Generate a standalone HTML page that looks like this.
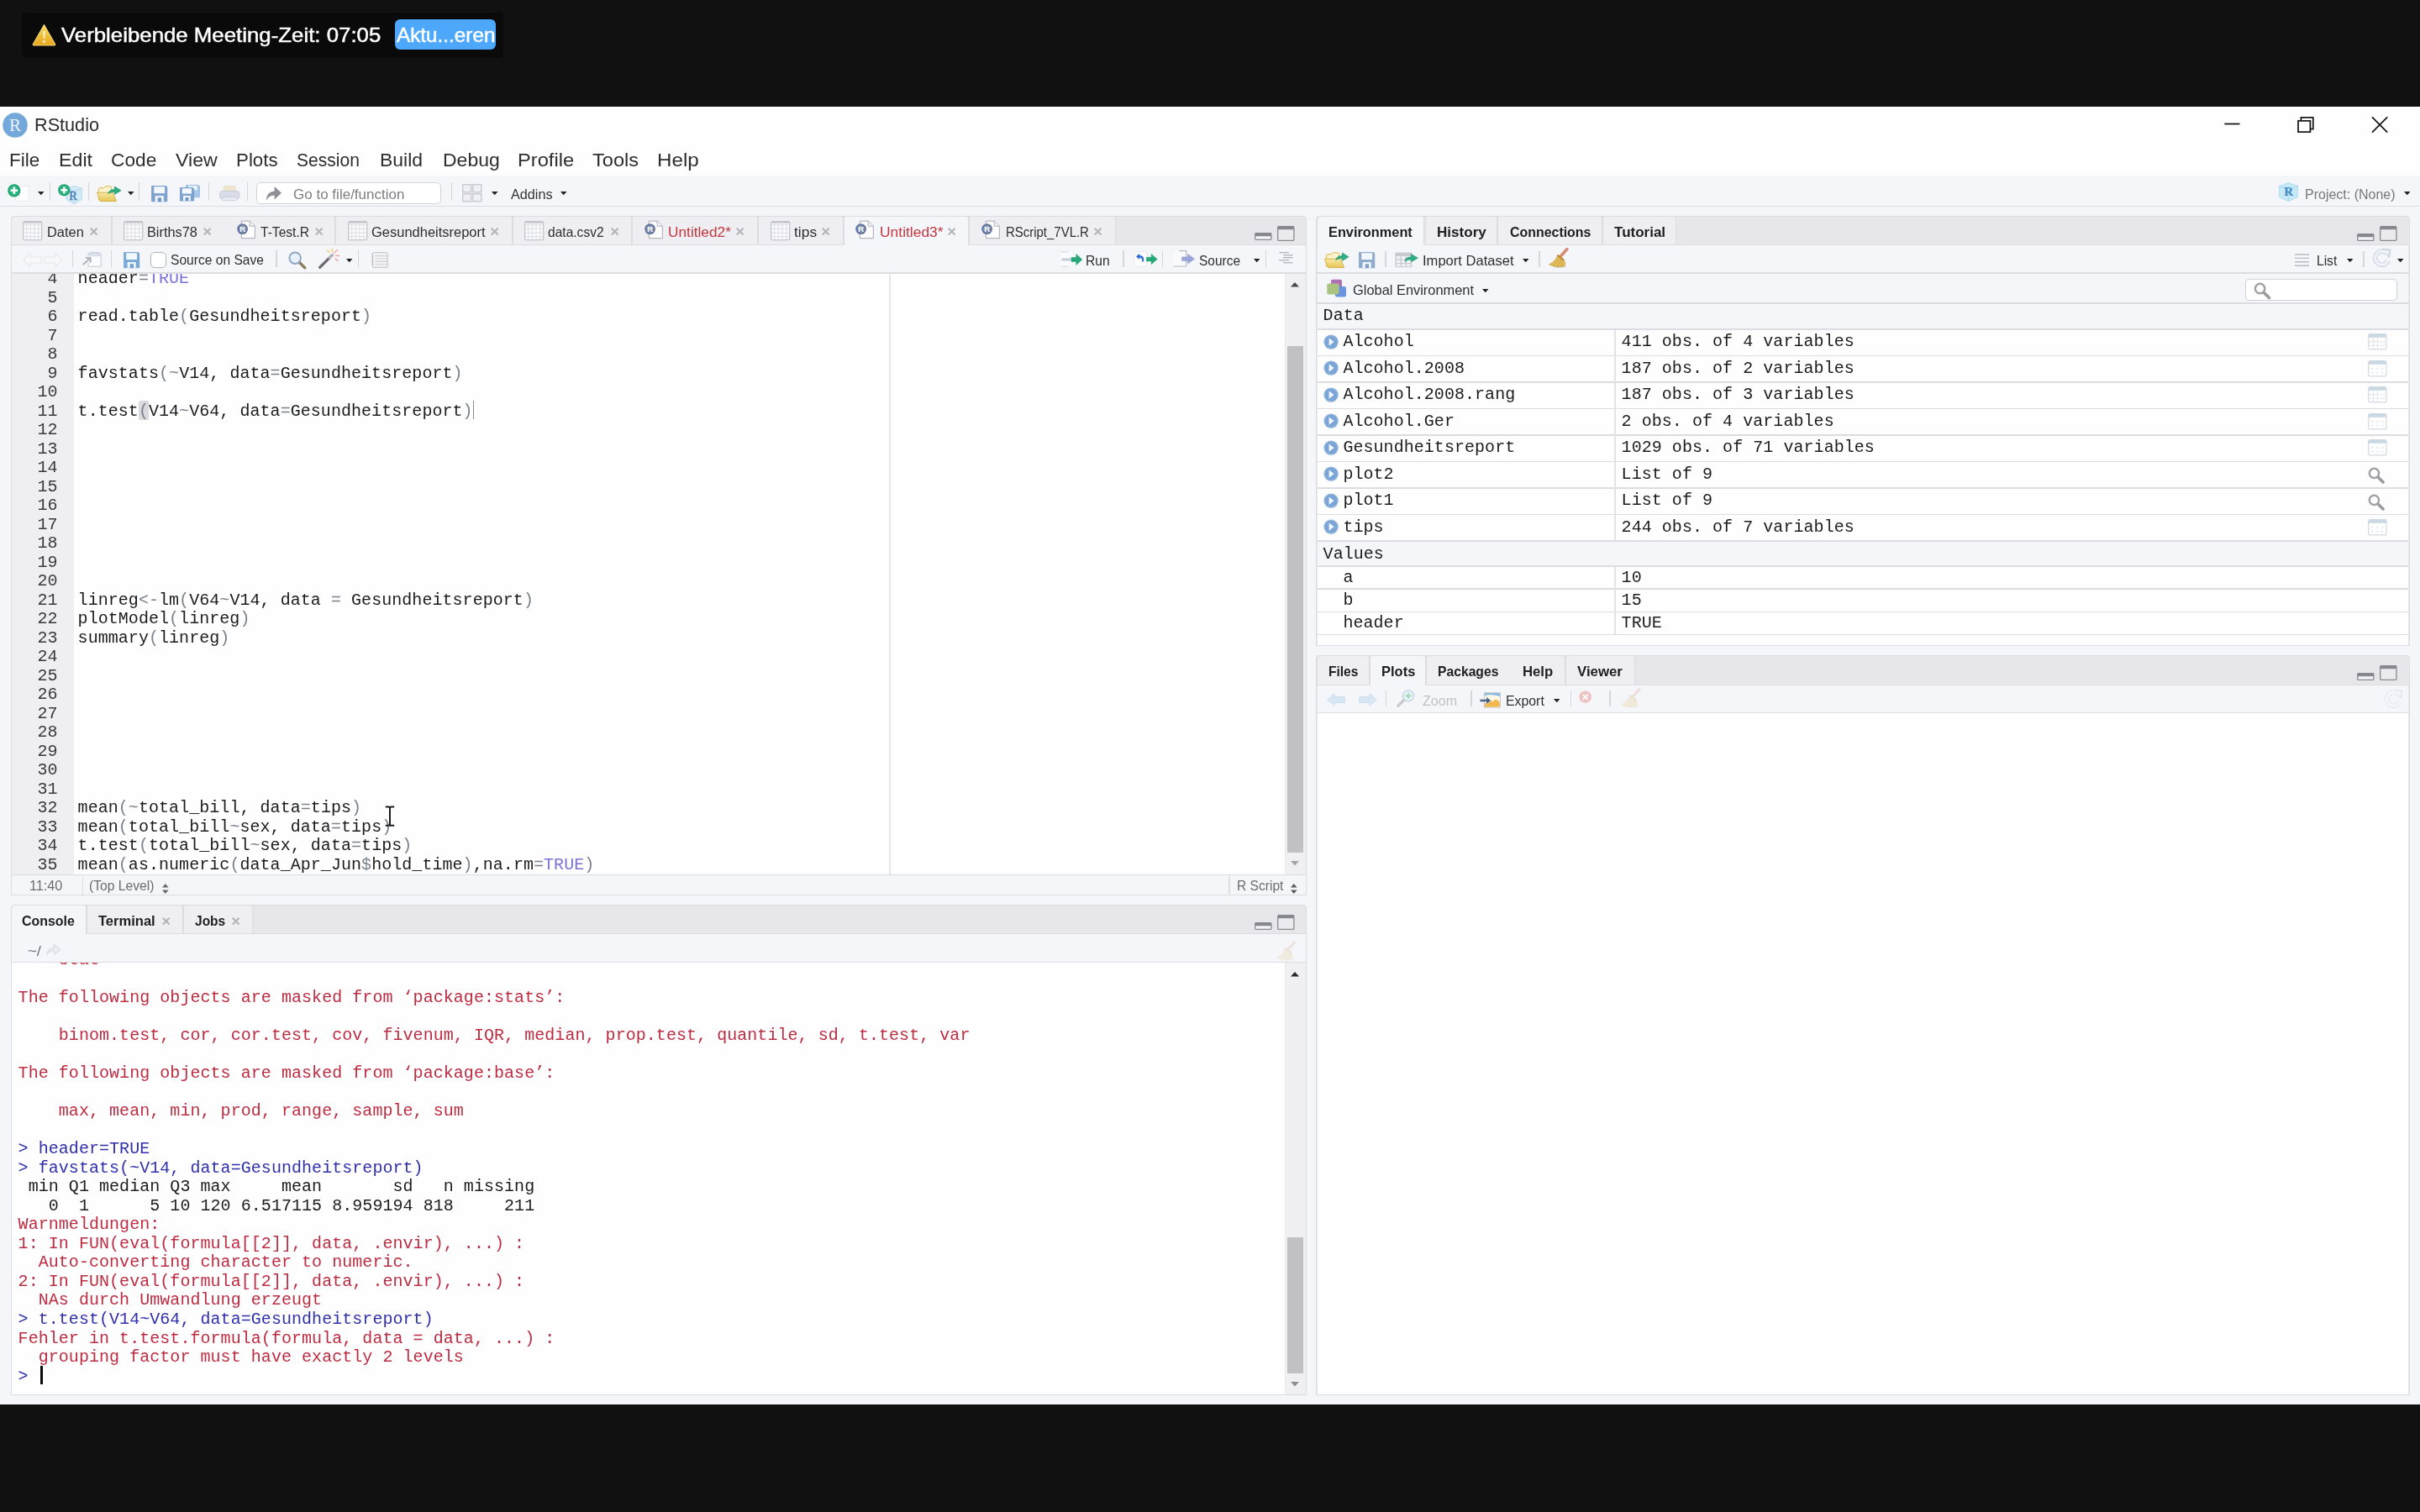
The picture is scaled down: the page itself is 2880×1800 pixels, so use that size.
<!DOCTYPE html>
<html><head><meta charset="utf-8"><title>RStudio</title>
<style>
html,body{margin:0;padding:0;}
body{width:2880px;height:1800px;background:#111111;position:relative;overflow:hidden;font-family:"Liberation Sans",sans-serif;}
.t{position:absolute;white-space:pre;line-height:1;transform-origin:0 50%;filter:blur(0.35px);}
.r{position:absolute;box-sizing:border-box;}
.m{font-family:"Liberation Mono",monospace;font-size:20px;letter-spacing:0.05px;}
svg{overflow:visible;}
</style></head><body>
<div class="r" style="left:26.00px;top:15.00px;width:573.00px;height:53.50px;background:#0a0a0a;border-radius:4px;"></div>
<svg class="r" style="left:37.50px;top:28.00px;" width="29" height="27" viewBox="0 0 29 27"><defs><linearGradient id="wg" x1="0" y1="0" x2="0" y2="1"><stop offset="0" stop-color="#f8dc62"/><stop offset="1" stop-color="#e9a51c"/></linearGradient></defs><path d="M14.5 1.6 L27.6 24.4 Q28 26 26.4 26 H2.6 Q1 26 1.4 24.4 Z" fill="url(#wg)" stroke="#f3d777" stroke-width="1.1" stroke-linejoin="round"/><path d="M13.1 9 h2.8 l-0.6 9 h-1.6 z" fill="#f8f0c8"/><circle cx="14.5" cy="21.6" r="1.7" fill="#f8f0c8"/></svg>
<div class="t" style="left:72.50px;top:31.16px;font-size:23.2px;color:#ffffff;transform:scaleX(1.1132);-webkit-text-stroke:0.45px #fff;">Verbleibende Meeting-Zeit: 07:05</div>
<div class="r" style="left:470.00px;top:23.00px;width:120.20px;height:36.00px;background:#4da8fc;border-radius:6px;"></div>
<div class="t" style="left:471.50px;top:31.16px;font-size:23.2px;color:#ffffff;transform:scaleX(1.0473);-webkit-text-stroke:0.45px #fff;">Aktu...eren</div>
<div class="r" style="left:0.00px;top:127.00px;width:2880.00px;height:1544.50px;background:#f5f6fa;"></div>
<div class="r" style="left:0.00px;top:127.00px;width:2880.00px;height:82.00px;background:#fefefe;"></div>
<svg class="r" style="left:3.00px;top:133.50px;" width="30" height="30" viewBox="0 0 30 30"><circle cx="15" cy="15" r="14.8" fill="#75a8da"/><text x="15" y="22" text-anchor="middle" font-family="Liberation Serif" font-size="21" fill="#eaf2fb">R</text></svg>
<div class="t" style="left:41.00px;top:139.27px;font-size:21.3px;color:#2a2a2a;transform:scaleX(1.0161);">RStudio</div>
<svg class="r" style="left:2640.00px;top:135.00px;" width="210" height="28" viewBox="0 0 210 28"><g stroke="#1a1a1a" stroke-width="1.8" fill="none"><path d="M7.3 12.5H25.5"/><path d="M95 8.8H109.4V22.2H95Z"/><path d="M98.4 8.8V4.9H112.8V18.6H109.4"/><path d="M183 4.4L201.2 22.6M201.2 4.4L183 22.6"/></g></svg>
<div class="t" style="left:11.20px;top:181.27px;font-size:21.3px;color:#2e2e30;transform:scaleX(1.0518);">File</div>
<div class="t" style="left:70.20px;top:181.27px;font-size:21.3px;color:#2e2e30;transform:scaleX(1.0898);">Edit</div>
<div class="t" style="left:132.40px;top:181.27px;font-size:21.3px;color:#2e2e30;transform:scaleX(1.0663);">Code</div>
<div class="t" style="left:209.10px;top:181.27px;font-size:21.3px;color:#2e2e30;transform:scaleX(1.0877);">View</div>
<div class="t" style="left:281.30px;top:181.27px;font-size:21.3px;color:#2e2e30;transform:scaleX(1.0495);">Plots</div>
<div class="t" style="left:353.20px;top:181.27px;font-size:21.3px;color:#2e2e30;transform:scaleX(0.9897);">Session</div>
<div class="t" style="left:451.60px;top:181.27px;font-size:21.3px;color:#2e2e30;transform:scaleX(1.0788);">Build</div>
<div class="t" style="left:526.50px;top:181.27px;font-size:21.3px;color:#2e2e30;transform:scaleX(1.0802);">Debug</div>
<div class="t" style="left:616.40px;top:181.27px;font-size:21.3px;color:#2e2e30;transform:scaleX(1.1113);">Profile</div>
<div class="t" style="left:704.80px;top:181.27px;font-size:21.3px;color:#2e2e30;transform:scaleX(1.1101);">Tools</div>
<div class="t" style="left:781.80px;top:181.27px;font-size:21.3px;color:#2e2e30;transform:scaleX(1.1368);">Help</div>
<div class="r" style="left:0.00px;top:244.60px;width:2880.00px;height:1.60px;background:#dcdce1;"></div>
<div class="r" style="left:58.70px;top:217.00px;width:1.30px;height:22.00px;background:#d6d6dc;"></div>
<div class="r" style="left:105.00px;top:217.00px;width:1.30px;height:22.00px;background:#d6d6dc;"></div>
<div class="r" style="left:165.20px;top:217.00px;width:1.30px;height:22.00px;background:#d6d6dc;"></div>
<div class="r" style="left:247.60px;top:217.00px;width:1.30px;height:22.00px;background:#d6d6dc;"></div>
<div class="r" style="left:293.90px;top:217.00px;width:1.30px;height:22.00px;background:#d6d6dc;"></div>
<div class="r" style="left:536.90px;top:217.00px;width:1.30px;height:22.00px;background:#d6d6dc;"></div>
<div class="r" style="left:305.00px;top:216.80px;width:219.50px;height:25.80px;background:#ffffff;border:1.3px solid #d3d3da;border-radius:5px;"></div>
<div class="t" style="left:348.60px;top:222.83px;font-size:16.5px;color:#7e7e83;transform:scaleX(1.0319);">Go to file/function</div>
<div class="t" style="left:607.50px;top:222.63px;font-size:16.5px;color:#333;transform:scaleX(0.9811);">Addins</div>
<svg class="r" style="left:44.95px;top:228.10px;" width="7.5" height="4.2" viewBox="0 0 7.5 4.2"><path d="M0 0H7.5L3.75 4.2Z" fill="#222"/></svg>
<svg class="r" style="left:151.95px;top:228.10px;" width="7.5" height="4.2" viewBox="0 0 7.5 4.2"><path d="M0 0H7.5L3.75 4.2Z" fill="#222"/></svg>
<svg class="r" style="left:584.95px;top:228.10px;" width="7.5" height="4.2" viewBox="0 0 7.5 4.2"><path d="M0 0H7.5L3.75 4.2Z" fill="#222"/></svg>
<svg class="r" style="left:667.45px;top:228.10px;" width="7.5" height="4.2" viewBox="0 0 7.5 4.2"><path d="M0 0H7.5L3.75 4.2Z" fill="#222"/></svg>
<div class="t" style="left:2743.00px;top:222.63px;font-size:16.5px;color:#77777b;transform:scaleX(0.9688);">Project: (None)</div>
<svg class="r" style="left:2860.75px;top:228.20px;" width="7.5" height="4.2" viewBox="0 0 7.5 4.2"><path d="M0 0H7.5L3.75 4.2Z" fill="#222"/></svg>
<svg class="r" style="left:8.60px;top:218.70px;" width="26" height="21" viewBox="0 0 26 21"><path d="M9.5 2.6H25.2V20.4H9.5Z" fill="#ffffff" stroke="#e4e4ea" stroke-width="0.8"/><circle cx="7.8" cy="7.8" r="7.6" fill="#1fa06e"/><circle cx="7.8" cy="7.8" r="6.2" fill="#2bb57f"/><path d="M7.8 3.6V12M3.6 7.8H12" stroke="#ffffff" stroke-width="2.6"/></svg>
<svg class="r" style="left:68.60px;top:218.70px;" width="29" height="24" viewBox="0 0 29 24"><path d="M10 5.4L19.6 2.2L28.4 5.2V18.6L19.4 23.6L10 19Z" fill="#d3ebf7" stroke="#b4d9ed" stroke-width="0.8"/><path d="M19.4 9V23.6M10 5.4L19.4 9L28.4 5.2" stroke="#a5d0e8" stroke-width="0.8" fill="none"/><text x="18.2" y="19" text-anchor="middle" font-family="Liberation Serif" font-size="14.5" fill="#3f79b5" stroke="#3f79b5" stroke-width="0.3">R</text><circle cx="7.3" cy="7.3" r="7.1" fill="#1fa06e"/><circle cx="7.3" cy="7.3" r="5.8" fill="#2bb57f"/><path d="M7.3 3.4V11.2M3.4 7.3H11.2" stroke="#ffffff" stroke-width="2.5"/></svg>
<svg class="r" style="left:114.80px;top:220.60px;" width="30" height="19.5" viewBox="0 0 30 19.5"><defs><linearGradient id="fg" x1="0" y1="0" x2="0" y2="1"><stop offset="0" stop-color="#f8e9a6"/><stop offset="1" stop-color="#e6c552"/></linearGradient></defs><path d="M2.4 17.6V4.2Q2.4 2.8 3.8 2.8H8.8L10.6 0.8H16.2Q17.6 0.8 17.6 2.4V6" fill="#fbf3cf" stroke="#d9b94c" stroke-width="1"/><path d="M0.8 8.2H19.6L22.6 18.6H3.4Z" fill="url(#fg)" stroke="#d4b042" stroke-width="0.9" stroke-linejoin="round" transform="skewX(8) translate(-1.6 0)"/><path d="M13.6 9.6Q14.6 4.6 21.4 4.4V1L29 5.8L21.4 10.4V7.4Q17 7.2 13.6 9.6Z" fill="#2fae82" stroke="#21976c" stroke-width="0.7" stroke-linejoin="round"/></svg>
<svg class="r" style="left:179.80px;top:220.80px;" width="19.4" height="19.4" viewBox="0 0 19.4 19.4"><g transform="scale(1.010)" opacity="1.0"><path d="M0.6 0.6H17.4L18.6 1.8V18.6H0.6Z" fill="#7fa2cf" stroke="#7096c6" stroke-width="0.8"/><rect x="3.2" y="1.2" width="12.8" height="7.8" fill="#f2f8fe"/><rect x="4.6" y="12" width="10" height="6.8" fill="#f2f8fe"/><rect x="7.6" y="14.2" width="4.4" height="4.8" fill="#7096c6"/></g></svg>
<svg class="r" style="left:214.40px;top:220.40px;" width="24" height="19.5" viewBox="0 0 24 19.5"><path d="M7.6 0.5H22L23.4 1.8V14.6H7.6Z" fill="#a6c8ea" stroke="#8fb4dc" stroke-width="0.8"/><rect x="10" y="1" width="10.8" height="5.4" fill="#e9f3fc"/><path d="M0.5 3.5H15.2L16.6 4.9V19H0.5Z" fill="#7fa2cf" stroke="#7096c6" stroke-width="0.8"/><rect x="2.8" y="4.2" width="11.2" height="6.4" fill="#f2f8fe"/><rect x="4" y="13" width="8.8" height="6" fill="#f2f8fe"/><rect x="6.6" y="15" width="3.8" height="4" fill="#7096c6"/></svg>
<svg class="r" style="left:260.60px;top:220.80px;" width="24.5" height="18.5" viewBox="0 0 24.5 18.5"><path d="M5.4 7V1.6Q5.4 0.6 6.4 0.6H18Q19 0.6 19 1.6V7Z" fill="#efe6cf" stroke="#e2d8c0" stroke-width="0.7"/><rect x="0.5" y="6.4" width="23.5" height="9.4" rx="3.4" fill="#d9dce6" stroke="#c4c8d4" stroke-width="0.8"/><rect x="3.4" y="13.4" width="17.6" height="4.4" rx="1.6" fill="#e8eaf1" stroke="#c4c8d4" stroke-width="0.8"/></svg>
<svg class="r" style="left:316.40px;top:220.60px;" width="19.5" height="18.5" viewBox="0 0 19.5 18.5"><path d="M0.6 17.8Q1.4 7.4 10.6 6.6V1L19 8.8L10.6 16.4V11.4Q4.6 11 0.6 17.8Z" fill="#8f8f95"/></svg>
<svg class="r" style="left:550.40px;top:218.60px;" width="24" height="22" viewBox="0 0 24 22"><g fill="#f0f0f4" stroke="#c6c6cc" stroke-width="1.3"><rect x="0.7" y="0.7" width="10" height="9"/><rect x="12.8" y="0.7" width="10" height="9"/><rect x="0.7" y="11.8" width="10" height="9"/><rect x="12.8" y="11.8" width="10" height="9"/></g></svg>
<svg class="r" style="left:2712.00px;top:217.20px;" width="23" height="23" viewBox="0 0 23 23"><path d="M0.6 4.6L11.4 0.6L22.4 4.4V17.6L11.4 22.6L0.6 17.8Z" fill="#c6e9f8" stroke="#a7d7ee" stroke-width="0.8"/><path d="M11.4 9V22.6M0.6 4.6L11.4 9L22.4 4.4" stroke="#a1d2ea" stroke-width="0.8" fill="none"/><text x="11.6" y="16.4" text-anchor="middle" font-family="Liberation Serif" font-weight="700" font-size="15" fill="#3d86c0">R</text></svg>
<div class="r" style="left:12.60px;top:256.80px;width:1542.40px;height:809.60px;background:#e7e6ea;border:1.3px solid #dcdce1;border-radius:4px 4px 0 0;"></div>
<div class="r" style="left:13.90px;top:291.60px;width:1539.80px;height:773.50px;background:#fefeff;"></div>
<div class="r" style="left:12.60px;top:291.00px;width:1542.40px;height:1.40px;background:#dcdce1;"></div>
<div class="r" style="left:13.00px;top:256.80px;width:119.80px;height:34.20px;background:#efeef2;border:1.3px solid #dcdce1;border-bottom:none;border-radius:5px 3px 0 0;"></div>
<svg class="r" style="left:27.30px;top:262.70px;" width="23.4" height="23.4" viewBox="0 0 23.4 23.4"><rect x="0.7" y="0.7" width="22.00" height="22.00" rx="1.6" fill="#fdfdfe" stroke="#c3c3cb" stroke-width="1.3"/><g stroke="#e1e1ea" stroke-width="1.3" fill="none"><path d="M4.68 1V22.4M1 4.68H22.4" /><path d="M9.36 1V22.4M1 9.36H22.4" /><path d="M14.04 1V22.4M1 14.04H22.4" /><path d="M18.72 1V22.4M1 18.72H22.4" /></g><path d="M1.4 1.7H22.00" stroke="#c6c6cd" stroke-width="2"/></svg>
<div class="t" style="left:55.60px;top:267.93px;font-size:16.5px;color:#2e2e30;transform:scaleX(0.9948);">Daten</div>
<svg class="r" style="left:107.10px;top:271.00px;" width="9.4" height="9.4" viewBox="0 0 9.4 9.4"><path d="M0.8 0.8L8.6 8.6M8.6 0.8L0.8 8.6" stroke="#b4b4b9" stroke-width="2.1" fill="none"/></svg>
<div class="r" style="left:132.80px;top:256.80px;width:266.50px;height:34.20px;background:#efeef2;border:1.3px solid #dcdce1;border-bottom:none;border-radius:3px 3px 0 0;"></div>
<svg class="r" style="left:147.20px;top:262.70px;" width="23.4" height="23.4" viewBox="0 0 23.4 23.4"><rect x="0.7" y="0.7" width="22.00" height="22.00" rx="1.6" fill="#fdfdfe" stroke="#c3c3cb" stroke-width="1.3"/><g stroke="#e1e1ea" stroke-width="1.3" fill="none"><path d="M4.68 1V22.4M1 4.68H22.4" /><path d="M9.36 1V22.4M1 9.36H22.4" /><path d="M14.04 1V22.4M1 14.04H22.4" /><path d="M18.72 1V22.4M1 18.72H22.4" /></g><path d="M1.4 1.7H22.00" stroke="#c6c6cd" stroke-width="2"/></svg>
<div class="t" style="left:175.40px;top:267.93px;font-size:16.5px;color:#2e2e30;transform:scaleX(0.9879);">Births78</div>
<svg class="r" style="left:242.20px;top:271.00px;" width="9.4" height="9.4" viewBox="0 0 9.4 9.4"><path d="M0.8 0.8L8.6 8.6M8.6 0.8L0.8 8.6" stroke="#b4b4b9" stroke-width="2.1" fill="none"/></svg>
<svg class="r" style="left:282.10px;top:262.40px;" width="23" height="23" viewBox="0 0 23 23"><path d="M5.4 1.2H15.2L21.4 7.2V21.6H5.4Z" fill="#fdfdfe" stroke="#b7b7bf" stroke-width="1.2" stroke-linejoin="round"/><path d="M15.2 1.2V7.2H21.4" fill="#f1f1f4" stroke="#b7b7bf" stroke-width="1.1" stroke-linejoin="round"/><circle cx="6.6" cy="10.6" r="6.4" fill="#64779d"/><circle cx="6.6" cy="10.6" r="4.6" fill="#7b8cb0"/><text x="6.7" y="14.2" text-anchor="middle" font-family="Liberation Sans" font-weight="700" font-size="9.6" fill="#ffffff">R</text></svg>
<div class="t" style="left:310.00px;top:267.93px;font-size:16.5px;color:#2e2e30;transform:scaleX(0.9442);">T-Test.R</div>
<svg class="r" style="left:374.60px;top:271.00px;" width="9.4" height="9.4" viewBox="0 0 9.4 9.4"><path d="M0.8 0.8L8.6 8.6M8.6 0.8L0.8 8.6" stroke="#b4b4b9" stroke-width="2.1" fill="none"/></svg>
<div class="r" style="left:399.30px;top:256.80px;width:210.30px;height:34.20px;background:#efeef2;border:1.3px solid #dcdce1;border-bottom:none;border-radius:3px 3px 0 0;"></div>
<svg class="r" style="left:414.30px;top:262.70px;" width="23.4" height="23.4" viewBox="0 0 23.4 23.4"><rect x="0.7" y="0.7" width="22.00" height="22.00" rx="1.6" fill="#fdfdfe" stroke="#c3c3cb" stroke-width="1.3"/><g stroke="#e1e1ea" stroke-width="1.3" fill="none"><path d="M4.68 1V22.4M1 4.68H22.4" /><path d="M9.36 1V22.4M1 9.36H22.4" /><path d="M14.04 1V22.4M1 14.04H22.4" /><path d="M18.72 1V22.4M1 18.72H22.4" /></g><path d="M1.4 1.7H22.00" stroke="#c6c6cd" stroke-width="2"/></svg>
<div class="t" style="left:442.40px;top:267.93px;font-size:16.5px;color:#2e2e30;transform:scaleX(0.9989);">Gesundheitsreport</div>
<svg class="r" style="left:584.40px;top:271.00px;" width="9.4" height="9.4" viewBox="0 0 9.4 9.4"><path d="M0.8 0.8L8.6 8.6M8.6 0.8L0.8 8.6" stroke="#b4b4b9" stroke-width="2.1" fill="none"/></svg>
<div class="r" style="left:609.60px;top:256.80px;width:142.40px;height:34.20px;background:#efeef2;border:1.3px solid #dcdce1;border-bottom:none;border-radius:3px 3px 0 0;"></div>
<svg class="r" style="left:624.30px;top:262.70px;" width="23.4" height="23.4" viewBox="0 0 23.4 23.4"><rect x="0.7" y="0.7" width="22.00" height="22.00" rx="1.6" fill="#fdfdfe" stroke="#c3c3cb" stroke-width="1.3"/><g stroke="#e1e1ea" stroke-width="1.3" fill="none"><path d="M4.68 1V22.4M1 4.68H22.4" /><path d="M9.36 1V22.4M1 9.36H22.4" /><path d="M14.04 1V22.4M1 14.04H22.4" /><path d="M18.72 1V22.4M1 18.72H22.4" /></g><path d="M1.4 1.7H22.00" stroke="#c6c6cd" stroke-width="2"/></svg>
<div class="t" style="left:652.20px;top:267.93px;font-size:16.5px;color:#2e2e30;transform:scaleX(0.9430);">data.csv2</div>
<svg class="r" style="left:726.50px;top:271.00px;" width="9.4" height="9.4" viewBox="0 0 9.4 9.4"><path d="M0.8 0.8L8.6 8.6M8.6 0.8L0.8 8.6" stroke="#b4b4b9" stroke-width="2.1" fill="none"/></svg>
<div class="r" style="left:752.00px;top:256.80px;width:149.80px;height:34.20px;background:#efeef2;border:1.3px solid #dcdce1;border-bottom:none;border-radius:3px 3px 0 0;"></div>
<svg class="r" style="left:766.50px;top:262.40px;" width="23" height="23" viewBox="0 0 23 23"><path d="M5.4 1.2H15.2L21.4 7.2V21.6H5.4Z" fill="#fdfdfe" stroke="#b7b7bf" stroke-width="1.2" stroke-linejoin="round"/><path d="M15.2 1.2V7.2H21.4" fill="#f1f1f4" stroke="#b7b7bf" stroke-width="1.1" stroke-linejoin="round"/><circle cx="6.6" cy="10.6" r="6.4" fill="#64779d"/><circle cx="6.6" cy="10.6" r="4.6" fill="#7b8cb0"/><text x="6.7" y="14.2" text-anchor="middle" font-family="Liberation Sans" font-weight="700" font-size="9.6" fill="#ffffff">R</text></svg>
<div class="t" style="left:794.70px;top:267.93px;font-size:16.5px;color:#c4373f;transform:scaleX(1.0469);">Untitled2*</div>
<svg class="r" style="left:876.20px;top:271.00px;" width="9.4" height="9.4" viewBox="0 0 9.4 9.4"><path d="M0.8 0.8L8.6 8.6M8.6 0.8L0.8 8.6" stroke="#b4b4b9" stroke-width="2.1" fill="none"/></svg>
<div class="r" style="left:901.80px;top:256.80px;width:102.50px;height:34.20px;background:#efeef2;border:1.3px solid #dcdce1;border-bottom:none;border-radius:3px 3px 0 0;"></div>
<svg class="r" style="left:916.70px;top:262.70px;" width="23.4" height="23.4" viewBox="0 0 23.4 23.4"><rect x="0.7" y="0.7" width="22.00" height="22.00" rx="1.6" fill="#fdfdfe" stroke="#c3c3cb" stroke-width="1.3"/><g stroke="#e1e1ea" stroke-width="1.3" fill="none"><path d="M4.68 1V22.4M1 4.68H22.4" /><path d="M9.36 1V22.4M1 9.36H22.4" /><path d="M14.04 1V22.4M1 14.04H22.4" /><path d="M18.72 1V22.4M1 18.72H22.4" /></g><path d="M1.4 1.7H22.00" stroke="#c6c6cd" stroke-width="2"/></svg>
<div class="t" style="left:944.70px;top:267.93px;font-size:16.5px;color:#2e2e30;transform:scaleX(1.0554);">tips</div>
<svg class="r" style="left:978.20px;top:271.00px;" width="9.4" height="9.4" viewBox="0 0 9.4 9.4"><path d="M0.8 0.8L8.6 8.6M8.6 0.8L0.8 8.6" stroke="#b4b4b9" stroke-width="2.1" fill="none"/></svg>
<div class="r" style="left:1004.30px;top:256.80px;width:148.70px;height:36.00px;background:#f5f6fa;border:1.3px solid #dcdce1;border-bottom:none;border-radius:3px 3px 0 0;"></div>
<svg class="r" style="left:1018.20px;top:262.40px;" width="23" height="23" viewBox="0 0 23 23"><path d="M5.4 1.2H15.2L21.4 7.2V21.6H5.4Z" fill="#fdfdfe" stroke="#b7b7bf" stroke-width="1.2" stroke-linejoin="round"/><path d="M15.2 1.2V7.2H21.4" fill="#f1f1f4" stroke="#b7b7bf" stroke-width="1.1" stroke-linejoin="round"/><circle cx="6.6" cy="10.6" r="6.4" fill="#64779d"/><circle cx="6.6" cy="10.6" r="4.6" fill="#7b8cb0"/><text x="6.7" y="14.2" text-anchor="middle" font-family="Liberation Sans" font-weight="700" font-size="9.6" fill="#ffffff">R</text></svg>
<div class="t" style="left:1046.50px;top:267.93px;font-size:16.5px;color:#c4373f;transform:scaleX(1.0567);">Untitled3*</div>
<svg class="r" style="left:1128.40px;top:271.00px;" width="9.4" height="9.4" viewBox="0 0 9.4 9.4"><path d="M0.8 0.8L8.6 8.6M8.6 0.8L0.8 8.6" stroke="#b4b4b9" stroke-width="2.1" fill="none"/></svg>
<div class="r" style="left:1153.00px;top:256.80px;width:175.00px;height:34.20px;background:#efeef2;border:1.3px solid #dcdce1;border-bottom:none;border-radius:3px 3px 0 0;"></div>
<svg class="r" style="left:1168.20px;top:262.40px;" width="23" height="23" viewBox="0 0 23 23"><path d="M5.4 1.2H15.2L21.4 7.2V21.6H5.4Z" fill="#fdfdfe" stroke="#b7b7bf" stroke-width="1.2" stroke-linejoin="round"/><path d="M15.2 1.2V7.2H21.4" fill="#f1f1f4" stroke="#b7b7bf" stroke-width="1.1" stroke-linejoin="round"/><circle cx="6.6" cy="10.6" r="6.4" fill="#64779d"/><circle cx="6.6" cy="10.6" r="4.6" fill="#7b8cb0"/><text x="6.7" y="14.2" text-anchor="middle" font-family="Liberation Sans" font-weight="700" font-size="9.6" fill="#ffffff">R</text></svg>
<div class="t" style="left:1196.90px;top:267.93px;font-size:16.5px;color:#2e2e30;transform:scaleX(0.9063);">RScript_7VL.R</div>
<svg class="r" style="left:1302.20px;top:271.00px;" width="9.4" height="9.4" viewBox="0 0 9.4 9.4"><path d="M0.8 0.8L8.6 8.6M8.6 0.8L0.8 8.6" stroke="#b4b4b9" stroke-width="2.1" fill="none"/></svg>
<svg class="r" style="left:1492.50px;top:277.40px;" width="20.6" height="9" viewBox="0 0 20.6 9"><rect x="0.7" y="0.7" width="19.2" height="7.6" rx="1" fill="#f0f4f9" stroke="#898990" stroke-width="1.3"/><path d="M1 0.6H19.6V4.2H1Z" fill="#87878e"/><path d="M1.6 0.1H19L19.8 0.8H0.8Z" fill="#87878e"/></svg>
<svg class="r" style="left:1519.60px;top:268.50px;" width="20.6" height="18" viewBox="0 0 20.6 18"><rect x="0.7" y="0.7" width="19.2" height="16.6" rx="1" fill="#ebeaee" stroke="#898990" stroke-width="1.3"/><path d="M1 0.6H19.6V4.2H1Z" fill="#87878e"/><path d="M1.6 0.1H19L19.8 0.8H0.8Z" fill="#87878e"/></svg>
<div class="r" style="left:13.90px;top:292.00px;width:1539.80px;height:32.60px;background:#f5f6fa;"></div>
<div class="r" style="left:12.60px;top:324.40px;width:1542.40px;height:1.40px;background:#dcdce1;"></div>
<svg class="r" style="left:26.80px;top:301.00px;" width="22.6" height="17.4" viewBox="0 0 22.6 17.4"><path  d="M0.8 8.7L9 0.9V5.2H21.8V12.2H9V16.5Z" fill="#f8f8fb" stroke="#e9e9ee" stroke-width="1.3" stroke-linejoin="round"/></svg>
<svg class="r" style="left:52.40px;top:301.00px;" width="22.6" height="17.4" viewBox="0 0 22.6 17.4"><path transform="translate(22.6 0) scale(-1 1)" d="M0.8 8.7L9 0.9V5.2H21.8V12.2H9V16.5Z" fill="#f8f8fb" stroke="#e9e9ee" stroke-width="1.3" stroke-linejoin="round"/></svg>
<div class="r" style="left:85.70px;top:298.00px;width:1.30px;height:20.00px;background:#d6d6dc;"></div>
<div class="r" style="left:132.20px;top:298.00px;width:1.30px;height:20.00px;background:#d6d6dc;"></div>
<div class="r" style="left:328.40px;top:298.00px;width:1.30px;height:20.00px;background:#d6d6dc;"></div>
<div class="r" style="left:426.10px;top:298.00px;width:1.30px;height:20.00px;background:#d6d6dc;"></div>
<div class="r" style="left:1336.40px;top:298.00px;width:1.30px;height:20.00px;background:#d6d6dc;"></div>
<div class="r" style="left:1382.90px;top:298.00px;width:1.30px;height:20.00px;background:#d6d6dc;"></div>
<div class="r" style="left:1505.90px;top:298.00px;width:1.30px;height:20.00px;background:#d6d6dc;"></div>
<svg class="r" style="left:98.00px;top:300.00px;" width="23" height="18" viewBox="0 0 23 18"><path d="M7 17.2H22.2V4Q22.2 0.6 18.8 0.6H10.4Q7 0.6 7 4Z" fill="#fbfcfe" stroke="#c9ccd6" stroke-width="1.1"/><path d="M7.5 5.2V4Q7.5 1.1 10.4 1.1H18.8Q21.7 1.1 21.7 4V5.2Z" fill="#d6e0ec"/><path d="M1.2 14.6L9 7.6M4.6 6.8H9.6V11.8" stroke="#fbfbfd" stroke-width="4.2" fill="none" stroke-linecap="round"/><path d="M1.2 14.6L9 7.6M4.6 6.8H9.6V11.8" stroke="#b7b7bf" stroke-width="2.2" fill="none" stroke-linecap="round"/></svg>
<svg class="r" style="left:146.80px;top:300.20px;" width="19.3" height="19.3" viewBox="0 0 19.3 19.3"><g transform="scale(1.005)" opacity="1.0"><path d="M0.6 0.6H17.4L18.6 1.8V18.6H0.6Z" fill="#79aad7" stroke="#6e9fce" stroke-width="0.8"/><rect x="3.2" y="1.2" width="12.8" height="7.8" fill="#f2f8fe"/><rect x="4.6" y="12" width="10" height="6.8" fill="#f2f8fe"/><rect x="7.6" y="14.2" width="4.4" height="4.8" fill="#6e9fce"/></g></svg>
<div class="r" style="left:178.80px;top:300.00px;width:18.90px;height:19.10px;background:#ffffff;border:1.4px solid #b4b4ba;border-radius:5px;"></div>
<div class="t" style="left:203.00px;top:301.43px;font-size:16.5px;color:#303034;transform:scaleX(0.9454);">Source on Save</div>
<svg class="r" style="left:343.00px;top:299.40px;" width="21.5" height="21.5" viewBox="0 0 21.5 21.5"><g transform="scale(1.024)"><path d="M12.4 12.4L19.4 19.4" stroke="#8a8060" stroke-width="3.4" stroke-linecap="round"/><circle cx="8" cy="8" r="6.6" fill="#e8f1fa" stroke="#8fa6c4" stroke-width="1.9"/></g></svg>
<svg class="r" style="left:378.50px;top:295.60px;" width="26" height="24" viewBox="0 0 26 24"><path d="M1.6 22.4L16.4 7.6" stroke="#6a6a70" stroke-width="3.2" stroke-linecap="round"/><path d="M13.2 10.8L16.4 7.6" stroke="#b9b9c0" stroke-width="3.2" stroke-linecap="round"/><g stroke="#f0a090" stroke-width="1.3" stroke-linecap="round"><path d="M19 5L22.6 1.4"/><path d="M20.4 8.4H24.6"/><path d="M20 12L23 14.6"/></g><g stroke="#f3c860" stroke-width="1.3" stroke-linecap="round"><path d="M16.4 3.8V0.6"/><path d="M13 4.4L10.8 2"/></g></svg>
<svg class="r" style="left:412.45px;top:308.30px;" width="7.5" height="4.2" viewBox="0 0 7.5 4.2"><path d="M0 0H7.5L3.75 4.2Z" fill="#222"/></svg>
<svg class="r" style="left:441.60px;top:299.80px;" width="20" height="19" viewBox="0 0 20 19"><rect x="1.6" y="0.7" width="17.6" height="17.6" rx="1.6" fill="#f4f4f7" stroke="#c9c9cf" stroke-width="1.2"/><g stroke="#cfcfd5" stroke-width="1.1"><path d="M4.4 4.6H19M4.4 8H19M4.4 11.4H19M4.4 14.8H19"/></g><path d="M1.2 2.4V16.6" stroke="#b9b9c0" stroke-width="1.6" stroke-dasharray="1.6 1.2"/></svg>
<svg class="r" style="left:1261.00px;top:298.60px;" width="27" height="19" viewBox="0 0 27 19"><rect x="1.8" y="0.6" width="12.8" height="17.7" fill="#fbfbfd"/><g stroke="#dcdce1" stroke-width="1.2"><path d="M1.8 0.8H11"/><path d="M1.8 18.2H11"/></g><path d="M2.4 10H13.4" stroke="#c6cad7" stroke-width="3"/><path d="M14 7.6H19.8V3.6L26.8 10L19.8 16.4V12.4H14Z" fill="#27a877" stroke="#1f9a6c" stroke-width="0.5"/></svg>
<div class="t" style="left:1292.30px;top:302.43px;font-size:16.5px;color:#303034;transform:scaleX(0.9514);">Run</div>
<svg class="r" style="left:1348.60px;top:298.60px;" width="29" height="19" viewBox="0 0 29 19"><rect x="0.7" y="0.5" width="15.3" height="17.8" rx="2.6" fill="#fdfdfe" stroke="#e7e7ec" stroke-width="0.9"/><path d="M10.2 12.4Q10.6 8 7.2 7.8V10L3 6.4L7.2 2.8V5Q13.2 5 12.2 12.4Z" fill="#2f6fd6"/><path d="M15.4 7.3H21.2V3.6L28.2 9.6L21.2 15.7V11.9H15.4Z" fill="#27a877" stroke="#1f9a6c" stroke-width="0.5"/></svg>
<svg class="r" style="left:1396.00px;top:298.40px;" width="26" height="20" viewBox="0 0 26 20"><rect x="0.6" y="0.6" width="15" height="18.4" fill="#fbfbfd"/><path d="M7.6 0.7H15.6V19H0.6" fill="none" stroke="#b9b9c1" stroke-width="1.2"/><path d="M10.6 7.9H17.6V4.4L25.6 10.2L17.6 15.9V12.4H10.6Z" fill="#9aa6da" stroke="#8f9bd2" stroke-width="0.5"/></svg>
<div class="t" style="left:1427.20px;top:302.43px;font-size:16.5px;color:#303034;transform:scaleX(0.9372);">Source</div>
<svg class="r" style="left:1492.25px;top:308.30px;" width="7.5" height="4.2" viewBox="0 0 7.5 4.2"><path d="M0 0H7.5L3.75 4.2Z" fill="#222"/></svg>
<svg class="r" style="left:1522.20px;top:300.00px;" width="17" height="14" viewBox="0 0 17 14"><g stroke="#adafb7" stroke-width="1.25"><path d="M0.4 0.7H12"/><path d="M5.1 3.7H16.6"/><path d="M5.1 6.7H16.6"/><path d="M0.4 9.8H12"/><path d="M5.1 12.8H16.6"/></g></svg>
<div class="r" style="left:13.90px;top:325.6px;width:1515.10px;height:715.40px;background:#fefeff;overflow:hidden;">
<div class="r" style="left:0;top:0;width:74.40px;height:715.40px;background:#efeff2;"></div>
<div class="r" style="left:1044.30px;top:0;width:1.4px;height:715.40px;background:#e6e6ea;"></div>
<div class="r" style="left:150.88px;top:151.30px;width:12.03px;height:23px;background:#d9d9de;border-radius:2px;"></div>
<div class="t m" style="left:42.67px;top:-3.13px;color:#3a3a3e;">4</div>
<div class="t m" style="left:78.70px;top:-3.13px;color:#1c1c1c;">header<span style="color:#7b828c">=</span><span style="color:#7a73d8">TRUE</span></div>
<div class="t m" style="left:42.67px;top:19.37px;color:#3a3a3e;">5</div>
<div class="t m" style="left:42.67px;top:41.87px;color:#3a3a3e;">6</div>
<div class="t m" style="left:78.70px;top:41.87px;color:#1c1c1c;">read.table<span style="color:#7b828c">(</span>Gesundheitsreport<span style="color:#7b828c">)</span></div>
<div class="t m" style="left:42.67px;top:64.37px;color:#3a3a3e;">7</div>
<div class="t m" style="left:42.67px;top:86.87px;color:#3a3a3e;">8</div>
<div class="t m" style="left:42.67px;top:109.37px;color:#3a3a3e;">9</div>
<div class="t m" style="left:78.70px;top:109.37px;color:#1c1c1c;">favstats<span style="color:#7b828c">(</span><span style="color:#7b828c">~</span>V14, data<span style="color:#7b828c">=</span>Gesundheitsreport<span style="color:#7b828c">)</span></div>
<div class="t m" style="left:30.64px;top:131.87px;color:#3a3a3e;">10</div>
<div class="t m" style="left:30.64px;top:154.37px;color:#3a3a3e;">11</div>
<div class="t m" style="left:78.70px;top:154.37px;color:#1c1c1c;">t.test<span style="color:#7b828c">(</span>V14<span style="color:#7b828c">~</span>V64, data<span style="color:#7b828c">=</span>Gesundheitsreport<span style="color:#7b828c">)</span></div>
<div class="t m" style="left:30.64px;top:176.87px;color:#3a3a3e;">12</div>
<div class="t m" style="left:30.64px;top:199.37px;color:#3a3a3e;">13</div>
<div class="t m" style="left:30.64px;top:221.87px;color:#3a3a3e;">14</div>
<div class="t m" style="left:30.64px;top:244.37px;color:#3a3a3e;">15</div>
<div class="t m" style="left:30.64px;top:266.87px;color:#3a3a3e;">16</div>
<div class="t m" style="left:30.64px;top:289.37px;color:#3a3a3e;">17</div>
<div class="t m" style="left:30.64px;top:311.87px;color:#3a3a3e;">18</div>
<div class="t m" style="left:30.64px;top:334.37px;color:#3a3a3e;">19</div>
<div class="t m" style="left:30.64px;top:356.87px;color:#3a3a3e;">20</div>
<div class="t m" style="left:30.64px;top:379.37px;color:#3a3a3e;">21</div>
<div class="t m" style="left:78.70px;top:379.37px;color:#1c1c1c;">linreg<span style="color:#7b828c">&lt;-</span>lm<span style="color:#7b828c">(</span>V64<span style="color:#7b828c">~</span>V14, data <span style="color:#7b828c">=</span> Gesundheitsreport<span style="color:#7b828c">)</span></div>
<div class="t m" style="left:30.64px;top:401.87px;color:#3a3a3e;">22</div>
<div class="t m" style="left:78.70px;top:401.87px;color:#1c1c1c;">plotModel<span style="color:#7b828c">(</span>linreg<span style="color:#7b828c">)</span></div>
<div class="t m" style="left:30.64px;top:424.37px;color:#3a3a3e;">23</div>
<div class="t m" style="left:78.70px;top:424.37px;color:#1c1c1c;">summary<span style="color:#7b828c">(</span>linreg<span style="color:#7b828c">)</span></div>
<div class="t m" style="left:30.64px;top:446.87px;color:#3a3a3e;">24</div>
<div class="t m" style="left:30.64px;top:469.37px;color:#3a3a3e;">25</div>
<div class="t m" style="left:30.64px;top:491.87px;color:#3a3a3e;">26</div>
<div class="t m" style="left:30.64px;top:514.37px;color:#3a3a3e;">27</div>
<div class="t m" style="left:30.64px;top:536.87px;color:#3a3a3e;">28</div>
<div class="t m" style="left:30.64px;top:559.37px;color:#3a3a3e;">29</div>
<div class="t m" style="left:30.64px;top:581.87px;color:#3a3a3e;">30</div>
<div class="t m" style="left:30.64px;top:604.37px;color:#3a3a3e;">31</div>
<div class="t m" style="left:30.64px;top:626.87px;color:#3a3a3e;">32</div>
<div class="t m" style="left:78.70px;top:626.87px;color:#1c1c1c;">mean<span style="color:#7b828c">(</span><span style="color:#7b828c">~</span>total_bill, data<span style="color:#7b828c">=</span>tips<span style="color:#7b828c">)</span></div>
<div class="t m" style="left:30.64px;top:649.37px;color:#3a3a3e;">33</div>
<div class="t m" style="left:78.70px;top:649.37px;color:#1c1c1c;">mean<span style="color:#7b828c">(</span>total_bill<span style="color:#7b828c">~</span>sex, data<span style="color:#7b828c">=</span>tips<span style="color:#7b828c">)</span></div>
<div class="t m" style="left:30.64px;top:671.87px;color:#3a3a3e;">34</div>
<div class="t m" style="left:78.70px;top:671.87px;color:#1c1c1c;">t.test<span style="color:#7b828c">(</span>total_bill<span style="color:#7b828c">~</span>sex, data<span style="color:#7b828c">=</span>tips<span style="color:#7b828c">)</span></div>
<div class="t m" style="left:30.64px;top:694.37px;color:#3a3a3e;">35</div>
<div class="t m" style="left:78.70px;top:694.37px;color:#1c1c1c;">mean<span style="color:#7b828c">(</span>as.numeric<span style="color:#7b828c">(</span>data_Apr_Jun<span style="color:#7b828c">$</span>hold_time<span style="color:#7b828c">)</span>,na.rm<span style="color:#7b828c">=</span><span style="color:#7a73d8">TRUE</span><span style="color:#7b828c">)</span></div>
<div class="r" style="left:548.87px;top:151.80px;width:1.6px;height:22px;background:#8a8a8e;"></div>
<svg class="r" style="left:444.30px;top:633.80px" width="12" height="25" viewBox="0 0 12 25"><path d="M0.8 1.4H4.4Q6 1.4 6 3Q6 1.4 7.6 1.4H11.2M6 2.4V22.6M0.8 23.8H4.4Q6 23.8 6 22.2Q6 23.8 7.6 23.8H11.2" stroke="#1c1c1c" stroke-width="2" fill="none"/></svg>
</div>
<div class="r" style="left:1529.00px;top:325.60px;width:25.00px;height:715.40px;background:#f0f0f3;border-left:1px solid #e9e9ee;"></div>
<div class="r" style="left:1531.60px;top:412.00px;width:19.60px;height:602.50px;background:#c1c1c3;"></div>
<svg class="r" style="left:1536.00px;top:336.40px;" width="10" height="5.4" viewBox="0 0 10 5.4"><path d="M0 5.4L5 0L10 5.4Z" fill="#4a4a4e"/></svg>
<svg class="r" style="left:1536.00px;top:1024.60px;" width="10" height="5.4" viewBox="0 0 10 5.4"><path d="M0 0L5 5.4L10 0Z" fill="#a3a3a7"/></svg>
<div class="r" style="left:13.90px;top:1041.00px;width:1539.80px;height:24.40px;background:#f5f6fa;border-top:1.3px solid #dcdce1;"></div>
<div class="t" style="left:35.40px;top:1046.33px;font-size:16.5px;color:#6c6c70;transform:scaleX(0.9784);">11:40</div>
<div class="r" style="left:97.60px;top:1042.50px;width:1.30px;height:22.50px;background:#dedee3;"></div>
<div class="t" style="left:106.30px;top:1046.33px;font-size:16.5px;color:#6c6c70;transform:scaleX(0.9495);">(Top Level)</div>
<svg class="r" style="left:193.40px;top:1052.00px;" width="7.6" height="12" viewBox="0 0 7.6 12"><path d="M0 4.6L3.8 0L7.6 4.6ZM0 7.4L3.8 12L7.6 7.4Z" fill="#6c6c70"/></svg>
<div class="r" style="left:1462.40px;top:1042.50px;width:1.30px;height:22.50px;background:#dedee3;"></div>
<div class="t" style="left:1471.60px;top:1046.33px;font-size:16.5px;color:#6c6c70;transform:scaleX(0.9441);">R Script</div>
<svg class="r" style="left:1536.00px;top:1052.00px;" width="7.6" height="12" viewBox="0 0 7.6 12"><path d="M0 4.6L3.8 0L7.6 4.6ZM0 7.4L3.8 12L7.6 7.4Z" fill="#5c5c60"/></svg>
<div class="r" style="left:12.60px;top:1077.20px;width:1542.40px;height:583.80px;background:#e7e6ea;border:1.3px solid #dcdce1;border-radius:4px 4px 0 0;"></div>
<div class="r" style="left:13.90px;top:1112.00px;width:1539.80px;height:547.70px;background:#fefeff;"></div>
<div class="r" style="left:12.60px;top:1111.40px;width:1542.40px;height:1.40px;background:#dcdce1;"></div>
<div class="r" style="left:13.00px;top:1077.20px;width:89.50px;height:36.00px;background:#f5f6fa;border:1.3px solid #dcdce1;border-bottom:none;border-radius:5px 3px 0 0;"></div>
<div class="t" style="left:26.30px;top:1088.23px;font-size:16.5px;color:#202024;font-weight:700;transform:scaleX(0.9648);">Console</div>
<div class="r" style="left:102.50px;top:1077.20px;width:115.30px;height:34.20px;background:#efeef2;border:1.3px solid #dcdce1;border-bottom:none;border-radius:3px 3px 0 0;"></div>
<div class="t" style="left:116.60px;top:1088.23px;font-size:16.5px;color:#202024;font-weight:700;transform:scaleX(1.0023);">Terminal</div>
<svg class="r" style="left:192.60px;top:1092.40px;" width="9.4" height="9.4" viewBox="0 0 9.4 9.4"><path d="M0.8 0.8L8.6 8.6M8.6 0.8L0.8 8.6" stroke="#b4b4b9" stroke-width="2.1" fill="none"/></svg>
<div class="r" style="left:217.80px;top:1077.20px;width:83.70px;height:34.20px;background:#efeef2;border:1.3px solid #dcdce1;border-bottom:none;border-radius:3px 3px 0 0;"></div>
<div class="t" style="left:231.60px;top:1088.23px;font-size:16.5px;color:#202024;font-weight:700;transform:scaleX(0.9400);">Jobs</div>
<svg class="r" style="left:276.20px;top:1092.40px;" width="9.4" height="9.4" viewBox="0 0 9.4 9.4"><path d="M0.8 0.8L8.6 8.6M8.6 0.8L0.8 8.6" stroke="#b4b4b9" stroke-width="2.1" fill="none"/></svg>
<svg class="r" style="left:1492.60px;top:1098.20px;" width="20.6" height="9" viewBox="0 0 20.6 9"><rect x="0.7" y="0.7" width="19.2" height="7.6" rx="1" fill="#f0f4f9" stroke="#898990" stroke-width="1.3"/><path d="M1 0.6H19.6V4.2H1Z" fill="#87878e"/><path d="M1.6 0.1H19L19.8 0.8H0.8Z" fill="#87878e"/></svg>
<svg class="r" style="left:1519.60px;top:1089.00px;" width="20.6" height="18" viewBox="0 0 20.6 18"><rect x="0.7" y="0.7" width="19.2" height="16.6" rx="1" fill="#ebeaee" stroke="#898990" stroke-width="1.3"/><path d="M1 0.6H19.6V4.2H1Z" fill="#87878e"/><path d="M1.6 0.1H19L19.8 0.8H0.8Z" fill="#87878e"/></svg>
<div class="r" style="left:13.90px;top:1112.40px;width:1539.80px;height:32.40px;background:#f5f6fa;"></div>
<div class="r" style="left:12.60px;top:1144.60px;width:1542.40px;height:1.40px;background:#dcdce1;"></div>
<div class="t" style="left:33.00px;top:1124.03px;font-size:16.5px;color:#6e6e74;transform:scaleX(1.1252);">~/</div>
<svg class="r" style="left:54.50px;top:1123.40px;" width="18" height="14" viewBox="0 0 18 14"><path d="M0.8 13.2Q1.6 6 9.4 5.6V1.4L17 7.4L9.4 13V9Q4.4 8.8 0.8 13.2Z" fill="#ececf1" stroke="#d9d9e0" stroke-width="1.1" stroke-linejoin="round"/></svg>
<svg class="r" style="left:1519.00px;top:1120.00px;" width="24" height="24" viewBox="0 0 24 24"><g opacity="0.16"><ellipse cx="13" cy="22.6" rx="8" ry="1.3" fill="#d9d9de"/><path d="M21.8 1.6L14.2 10.2" stroke="#d98a72" stroke-width="3.6" stroke-linecap="round"/><path d="M11.2 8.4L17.4 13.4Q20.4 17.6 19.6 21.2Q12 24.6 0.6 20Q8.6 15.6 11.2 8.4Z" fill="#e3bd5c" stroke="#caa244" stroke-width="0.8" stroke-linejoin="round"/><path d="M11 9.4L17.2 14.2" stroke="#b98d3a" stroke-width="2.4" stroke-linecap="round"/><path d="M5.4 20.6Q9.8 17.6 11.6 13.4M10 22Q13 18.8 14 15M14.6 22Q16 19 16.2 16.2" stroke="#c9a043" stroke-width="0.8" fill="none"/></g></svg>
<div class="r" style="left:13.90px;top:1146px;width:1515.10px;height:513.70px;background:#fefeff;overflow:hidden;">
<div class="t m" style="left:7.70px;top:-13.09px;color:#bd2d42;">    stat</div>
<div class="t m" style="left:7.70px;top:31.97px;color:#bd2d42;">The following objects are masked from ‘package:stats’:</div>
<div class="t m" style="left:7.70px;top:77.03px;color:#bd2d42;">    binom.test, cor, cor.test, cov, fivenum, IQR, median, prop.test, quantile, sd, t.test, var</div>
<div class="t m" style="left:7.70px;top:122.09px;color:#bd2d42;">The following objects are masked from ‘package:base’:</div>
<div class="t m" style="left:7.70px;top:167.15px;color:#bd2d42;">    max, mean, min, prod, range, sample, sum</div>
<div class="t m" style="left:7.70px;top:212.21px;color:#3030aa;">&gt; header=TRUE</div>
<div class="t m" style="left:7.70px;top:234.74px;color:#3030aa;">&gt; favstats(~V14, data=Gesundheitsreport)</div>
<div class="t m" style="left:7.70px;top:257.27px;color:#1c1c1c;"> min Q1 median Q3 max     mean       sd   n missing</div>
<div class="t m" style="left:7.70px;top:279.80px;color:#1c1c1c;">   0  1      5 10 120 6.517115 8.959194 818     211</div>
<div class="t m" style="left:7.70px;top:302.33px;color:#bd2d42;">Warnmeldungen:</div>
<div class="t m" style="left:7.70px;top:324.86px;color:#bd2d42;">1: In FUN(eval(formula[[2]], data, .envir), ...) :</div>
<div class="t m" style="left:7.70px;top:347.39px;color:#bd2d42;">  Auto-converting character to numeric.</div>
<div class="t m" style="left:7.70px;top:369.92px;color:#bd2d42;">2: In FUN(eval(formula[[2]], data, .envir), ...) :</div>
<div class="t m" style="left:7.70px;top:392.45px;color:#bd2d42;">  NAs durch Umwandlung erzeugt</div>
<div class="t m" style="left:7.70px;top:414.98px;color:#3030aa;">&gt; t.test(V14~V64, data=Gesundheitsreport)</div>
<div class="t m" style="left:7.70px;top:437.51px;color:#bd2d42;">Fehler in t.test.formula(formula, data = data, ...) :</div>
<div class="t m" style="left:7.70px;top:460.04px;color:#bd2d42;">  grouping factor must have exactly 2 levels</div>
<div class="t m" style="left:7.70px;top:482.57px;color:#3030aa;">&gt; </div>
<div class="r" style="left:33.96px;top:479.60px;width:3.2px;height:22.4px;background:#0c0c0c;"></div>
</div>
<div class="r" style="left:1529.00px;top:1146.00px;width:25.00px;height:513.70px;background:#f0f0f3;border-left:1px solid #e9e9ee;"></div>
<div class="r" style="left:1531.60px;top:1472.70px;width:19.60px;height:162.00px;background:#c1c1c3;"></div>
<svg class="r" style="left:1536.00px;top:1157.40px;" width="10" height="5.4" viewBox="0 0 10 5.4"><path d="M0 5.4L5 0L10 5.4Z" fill="#2a2a2e"/></svg>
<svg class="r" style="left:1536.00px;top:1644.60px;" width="10" height="5.4" viewBox="0 0 10 5.4"><path d="M0 0L5 5.4L10 0Z" fill="#8b8b90"/></svg>
<div class="r" style="left:1566.40px;top:256.80px;width:1301.20px;height:512.20px;background:#e7e6ea;border:1.3px solid #dcdce1;border-radius:4px 4px 0 0;"></div>
<div class="r" style="left:1567.70px;top:291.60px;width:1298.60px;height:476.10px;background:#fefeff;"></div>
<div class="r" style="left:1566.40px;top:291.00px;width:1301.20px;height:1.40px;background:#dcdce1;"></div>
<div class="r" style="left:1566.80px;top:256.80px;width:128.70px;height:36.00px;background:#f5f6fa;border:1.3px solid #dcdce1;border-bottom:none;border-radius:5px 3px 0 0;"></div>
<div class="t" style="left:1580.70px;top:268.43px;font-size:16.5px;color:#202024;font-weight:700;transform:scaleX(0.9896);">Environment</div>
<div class="r" style="left:1695.50px;top:256.80px;width:86.90px;height:34.20px;background:#efeef2;border:1.3px solid #dcdce1;border-bottom:none;border-radius:3px 3px 0 0;"></div>
<div class="t" style="left:1709.60px;top:268.43px;font-size:16.5px;color:#202024;font-weight:700;transform:scaleX(1.0343);">History</div>
<div class="r" style="left:1782.40px;top:256.80px;width:125.00px;height:34.20px;background:#efeef2;border:1.3px solid #dcdce1;border-bottom:none;border-radius:3px 3px 0 0;"></div>
<div class="t" style="left:1796.60px;top:268.43px;font-size:16.5px;color:#202024;font-weight:700;transform:scaleX(0.9648);">Connections</div>
<div class="r" style="left:1907.40px;top:256.80px;width:88.00px;height:34.20px;background:#efeef2;border:1.3px solid #dcdce1;border-bottom:none;border-radius:3px 3px 0 0;"></div>
<div class="t" style="left:1921.20px;top:268.43px;font-size:16.5px;color:#202024;font-weight:700;transform:scaleX(1.0308);">Tutorial</div>
<svg class="r" style="left:2805.00px;top:277.50px;" width="20.6" height="9" viewBox="0 0 20.6 9"><rect x="0.7" y="0.7" width="19.2" height="7.6" rx="1" fill="#f0f4f9" stroke="#898990" stroke-width="1.3"/><path d="M1 0.6H19.6V4.2H1Z" fill="#87878e"/><path d="M1.6 0.1H19L19.8 0.8H0.8Z" fill="#87878e"/></svg>
<svg class="r" style="left:2832.00px;top:268.50px;" width="20.6" height="18" viewBox="0 0 20.6 18"><rect x="0.7" y="0.7" width="19.2" height="16.6" rx="1" fill="#ebeaee" stroke="#898990" stroke-width="1.3"/><path d="M1 0.6H19.6V4.2H1Z" fill="#87878e"/><path d="M1.6 0.1H19L19.8 0.8H0.8Z" fill="#87878e"/></svg>
<div class="r" style="left:1567.70px;top:292.00px;width:1298.60px;height:32.60px;background:#f5f6fa;"></div>
<div class="r" style="left:1566.40px;top:324.40px;width:1301.20px;height:1.40px;background:#dcdce1;"></div>
<svg class="r" style="left:1576.00px;top:300.40px;" width="30" height="19.5" viewBox="0 0 30 19.5"><defs><linearGradient id="fg" x1="0" y1="0" x2="0" y2="1"><stop offset="0" stop-color="#f8e9a6"/><stop offset="1" stop-color="#e6c552"/></linearGradient></defs><path d="M2.4 17.6V4.2Q2.4 2.8 3.8 2.8H8.8L10.6 0.8H16.2Q17.6 0.8 17.6 2.4V6" fill="#fbf3cf" stroke="#d9b94c" stroke-width="1"/><path d="M0.8 8.2H19.6L22.6 18.6H3.4Z" fill="url(#fg)" stroke="#d4b042" stroke-width="0.9" stroke-linejoin="round" transform="skewX(8) translate(-1.6 0)"/><path d="M13.6 9.6Q14.6 4.6 21.4 4.4V1L29 5.8L21.4 10.4V7.4Q17 7.2 13.6 9.6Z" fill="#2fae82" stroke="#21976c" stroke-width="0.7" stroke-linejoin="round"/></svg>
<svg class="r" style="left:1616.90px;top:300.00px;" width="19.4" height="19.4" viewBox="0 0 19.4 19.4"><g transform="scale(1.010)" opacity="1.0"><path d="M0.6 0.6H17.4L18.6 1.8V18.6H0.6Z" fill="#8eaacd" stroke="#809fc6" stroke-width="0.8"/><rect x="3.2" y="1.2" width="12.8" height="7.8" fill="#f2f8fe"/><rect x="4.6" y="12" width="10" height="6.8" fill="#f2f8fe"/><rect x="7.6" y="14.2" width="4.4" height="4.8" fill="#809fc6"/></g></svg>
<div class="r" style="left:1648.40px;top:298.60px;width:1.30px;height:19.00px;background:#d6d6dc;"></div>
<div class="r" style="left:1831.40px;top:298.60px;width:1.30px;height:19.00px;background:#d6d6dc;"></div>
<div class="r" style="left:2812.40px;top:298.60px;width:1.30px;height:19.00px;background:#d6d6dc;"></div>
<svg class="r" style="left:1660.00px;top:299.80px;" width="28" height="19" viewBox="0 0 28 19"><rect x="0.4" y="0.6" width="19.8" height="17.6" fill="#c9c9d1"/><g fill="#f2f2f6"><rect x="1.8" y="5" width="4.8" height="3.4"/><rect x="7.9" y="5" width="4.8" height="3.4"/><rect x="14" y="5" width="4.8" height="3.4"/><rect x="1.8" y="9.6" width="4.8" height="3.4"/><rect x="7.9" y="9.6" width="4.8" height="3.4"/><rect x="14" y="9.6" width="4.8" height="3.4"/><rect x="1.8" y="14.2" width="4.8" height="3"/><rect x="7.9" y="14.2" width="4.8" height="3"/><rect x="14" y="14.2" width="4.8" height="3"/></g><path d="M11.8 11.4Q12.4 6 19.4 5.8V2.4L27.4 7.2L19.4 11.8V8.8Q15 8.6 11.8 11.4Z" fill="#2fae82" stroke="#21976c" stroke-width="0.6"/></svg>
<div class="t" style="left:1692.80px;top:302.43px;font-size:16.5px;color:#303034;transform:scaleX(1.0027);">Import Dataset</div>
<svg class="r" style="left:1812.05px;top:308.30px;" width="7.5" height="4.2" viewBox="0 0 7.5 4.2"><path d="M0 0H7.5L3.75 4.2Z" fill="#222"/></svg>
<svg class="r" style="left:1843.40px;top:295.20px;" width="24" height="24" viewBox="0 0 24 24"><g opacity="1.0"><ellipse cx="13" cy="22.6" rx="8" ry="1.3" fill="#d9d9de"/><path d="M21.8 1.6L14.2 10.2" stroke="#d98a72" stroke-width="3.6" stroke-linecap="round"/><path d="M11.2 8.4L17.4 13.4Q20.4 17.6 19.6 21.2Q12 24.6 0.6 20Q8.6 15.6 11.2 8.4Z" fill="#e3bd5c" stroke="#caa244" stroke-width="0.8" stroke-linejoin="round"/><path d="M11 9.4L17.2 14.2" stroke="#b98d3a" stroke-width="2.4" stroke-linecap="round"/><path d="M5.4 20.6Q9.8 17.6 11.6 13.4M10 22Q13 18.8 14 15M14.6 22Q16 19 16.2 16.2" stroke="#c9a043" stroke-width="0.8" fill="none"/></g></svg>
<svg class="r" style="left:2731.00px;top:302.00px;" width="17" height="15" viewBox="0 0 17 15"><g stroke="#b9b9bf" stroke-width="1.4"><path d="M0 1H17M0 5.4H17M0 9.8H17M0 14.2H17"/></g></svg>
<div class="t" style="left:2757.40px;top:302.43px;font-size:16.5px;color:#303034;transform:scaleX(0.9425);">List</div>
<svg class="r" style="left:2792.85px;top:308.30px;" width="7.5" height="4.2" viewBox="0 0 7.5 4.2"><path d="M0 0H7.5L3.75 4.2Z" fill="#222"/></svg>
<svg class="r" style="left:2822.60px;top:295.40px;" width="23" height="24" viewBox="0 0 23 24"><path d="M17.2 6.4A8 8 0 1 0 19 15.4" fill="none" stroke="#cfd6e2" stroke-width="5.6"/><path d="M12.6 1.6L21.6 2.4L20.4 11.2Z" fill="#cfd6e2" stroke="#cfd6e2" stroke-width="1.6" stroke-linejoin="round"/><path d="M17.2 6.4A8 8 0 1 0 19 15.4" fill="none" stroke="#eef3fa" stroke-width="3.2"/><path d="M14.4 2.8L20.4 3.4L19.6 9.2Z" fill="#eef3fa"/></svg>
<svg class="r" style="left:2852.65px;top:308.30px;" width="7.5" height="4.2" viewBox="0 0 7.5 4.2"><path d="M0 0H7.5L3.75 4.2Z" fill="#222"/></svg>
<div class="r" style="left:1567.70px;top:325.80px;width:1298.60px;height:34.60px;background:#f5f6fa;"></div>
<div class="r" style="left:1566.40px;top:360.20px;width:1301.20px;height:1.40px;background:#dcdce1;"></div>
<svg class="r" style="left:1579.00px;top:332.20px;" width="23.4" height="22" viewBox="0 0 23.4 22"><rect x="5" y="0.8" width="13" height="13.4" rx="1.8" fill="#b070b6"/><rect x="10" y="9.1" width="13" height="12.3" rx="1.8" fill="#6a94e0"/><rect x="0.3" y="5.5" width="14.2" height="13" rx="1.8" fill="#a9c47e"/></svg>
<div class="t" style="left:1609.80px;top:336.63px;font-size:16.5px;color:#303034;transform:scaleX(0.9937);">Global Environment</div>
<svg class="r" style="left:1764.05px;top:343.50px;" width="7.5" height="4.2" viewBox="0 0 7.5 4.2"><path d="M0 0H7.5L3.75 4.2Z" fill="#222"/></svg>
<div class="r" style="left:2672.40px;top:332.20px;width:181.00px;height:25.60px;background:#ffffff;border:1.3px solid #d3d3da;border-radius:4px;"></div>
<svg class="r" style="left:2681.60px;top:335.60px;" width="20" height="20" viewBox="0 0 20 20"><g transform="scale(1.026)"><path d="M11.4 11.4L18 18" stroke="#9c9ca0" stroke-width="3.6" stroke-linecap="round"/><circle cx="7.4" cy="7.4" r="5.6" fill="#ffffff" stroke="#a2a2a6" stroke-width="2.4"/></g></svg>
<div class="r" style="left:1567.70px;top:361.60px;width:1298.60px;height:30.40px;background:#f5f6fa;"></div>
<div class="t m" style="left:1574.60px;top:366.27px;color:#1c1c1c;">Data</div>
<div class="r" style="left:1567.70px;top:391.30px;width:1298.60px;height:1.40px;background:#dcdce2;"></div>
<svg class="r" style="left:1574.80px;top:397.65px;" width="18.2" height="18.2" viewBox="0 0 18.2 18.2"><g transform="scale(1.000)"><circle cx="9.1" cy="9.1" r="8.7" fill="#8fb2dc"/><circle cx="9.1" cy="9.1" r="7.2" fill="#7ba5d6"/><path d="M6.6 4.4L12.6 9.1L6.6 13.8Z" fill="#f4f9ff"/></g></svg>
<div class="t m" style="left:1598.40px;top:397.42px;color:#1c1c1c;">Alcohol</div>
<div class="t m" style="left:1929.60px;top:397.42px;color:#1c1c1c;">411 obs. of 4 variables</div>
<svg class="r" style="left:2818.40px;top:397.35px;" width="22.6" height="19.6" viewBox="0 0 22.6 19.6"><rect x="0.7" y="0.7" width="21.2" height="18.2" rx="2" fill="#ffffff" stroke="#d3d9e1" stroke-width="1.2"/><path d="M2.6 0.4H20L22 2.4V4.8H0.6V2.4Z" fill="#c9d8e2"/><g stroke="#e2e6ec" stroke-width="1.1"><path d="M6.4 5V18.4M11.6 5V18.4M1.2 9.6H13M1.2 14.2H13"/></g><g fill="#d9dee5"><rect x="15.2" y="9" width="1.5" height="1.5"/><rect x="18.4" y="9" width="1.5" height="1.5"/><rect x="15.2" y="13.6" width="1.5" height="1.5"/><rect x="18.4" y="13.6" width="1.5" height="1.5"/></g></svg>
<div class="r" style="left:1567.70px;top:422.80px;width:1298.60px;height:1.40px;background:#dcdce2;"></div>
<svg class="r" style="left:1574.80px;top:429.15px;" width="18.2" height="18.2" viewBox="0 0 18.2 18.2"><g transform="scale(1.000)"><circle cx="9.1" cy="9.1" r="8.7" fill="#8fb2dc"/><circle cx="9.1" cy="9.1" r="7.2" fill="#7ba5d6"/><path d="M6.6 4.4L12.6 9.1L6.6 13.8Z" fill="#f4f9ff"/></g></svg>
<div class="t m" style="left:1598.40px;top:428.92px;color:#1c1c1c;">Alcohol.2008</div>
<div class="t m" style="left:1929.60px;top:428.92px;color:#1c1c1c;">187 obs. of 2 variables</div>
<svg class="r" style="left:2818.40px;top:428.85px;" width="22.6" height="19.6" viewBox="0 0 22.6 19.6"><rect x="0.7" y="0.7" width="21.2" height="18.2" rx="2" fill="#ffffff" stroke="#d3d9e1" stroke-width="1.2"/><path d="M2.6 0.4H20L22 2.4V4.8H0.6V2.4Z" fill="#c9d8e2"/><g fill="#d9dee5"><rect x="4.4" y="9" width="1.6" height="1.6"/><rect x="10.4" y="9" width="1.6" height="1.6"/><rect x="16.4" y="9" width="1.6" height="1.6"/><rect x="4.4" y="13.8" width="1.6" height="1.6"/><rect x="10.4" y="13.8" width="1.6" height="1.6"/><rect x="16.4" y="13.8" width="1.6" height="1.6"/></g></svg>
<div class="r" style="left:1567.70px;top:454.30px;width:1298.60px;height:1.40px;background:#dcdce2;"></div>
<svg class="r" style="left:1574.80px;top:460.65px;" width="18.2" height="18.2" viewBox="0 0 18.2 18.2"><g transform="scale(1.000)"><circle cx="9.1" cy="9.1" r="8.7" fill="#8fb2dc"/><circle cx="9.1" cy="9.1" r="7.2" fill="#7ba5d6"/><path d="M6.6 4.4L12.6 9.1L6.6 13.8Z" fill="#f4f9ff"/></g></svg>
<div class="t m" style="left:1598.40px;top:460.42px;color:#1c1c1c;">Alcohol.2008.rang</div>
<div class="t m" style="left:1929.60px;top:460.42px;color:#1c1c1c;">187 obs. of 3 variables</div>
<svg class="r" style="left:2818.40px;top:460.35px;" width="22.6" height="19.6" viewBox="0 0 22.6 19.6"><rect x="0.7" y="0.7" width="21.2" height="18.2" rx="2" fill="#ffffff" stroke="#d3d9e1" stroke-width="1.2"/><path d="M2.6 0.4H20L22 2.4V4.8H0.6V2.4Z" fill="#c9d8e2"/><g stroke="#e2e6ec" stroke-width="1.1"><path d="M6.4 5V18.4M11.6 5V18.4M1.2 9.6H13M1.2 14.2H13"/></g><g fill="#d9dee5"><rect x="15.2" y="9" width="1.5" height="1.5"/><rect x="18.4" y="9" width="1.5" height="1.5"/><rect x="15.2" y="13.6" width="1.5" height="1.5"/><rect x="18.4" y="13.6" width="1.5" height="1.5"/></g></svg>
<div class="r" style="left:1567.70px;top:485.80px;width:1298.60px;height:1.40px;background:#dcdce2;"></div>
<svg class="r" style="left:1574.80px;top:492.15px;" width="18.2" height="18.2" viewBox="0 0 18.2 18.2"><g transform="scale(1.000)"><circle cx="9.1" cy="9.1" r="8.7" fill="#8fb2dc"/><circle cx="9.1" cy="9.1" r="7.2" fill="#7ba5d6"/><path d="M6.6 4.4L12.6 9.1L6.6 13.8Z" fill="#f4f9ff"/></g></svg>
<div class="t m" style="left:1598.40px;top:491.92px;color:#1c1c1c;">Alcohol.Ger</div>
<div class="t m" style="left:1929.60px;top:491.92px;color:#1c1c1c;">2 obs. of 4 variables</div>
<svg class="r" style="left:2818.40px;top:491.85px;" width="22.6" height="19.6" viewBox="0 0 22.6 19.6"><rect x="0.7" y="0.7" width="21.2" height="18.2" rx="2" fill="#ffffff" stroke="#d3d9e1" stroke-width="1.2"/><path d="M2.6 0.4H20L22 2.4V4.8H0.6V2.4Z" fill="#c9d8e2"/><g fill="#d9dee5"><rect x="4.4" y="9" width="1.6" height="1.6"/><rect x="10.4" y="9" width="1.6" height="1.6"/><rect x="16.4" y="9" width="1.6" height="1.6"/><rect x="4.4" y="13.8" width="1.6" height="1.6"/><rect x="10.4" y="13.8" width="1.6" height="1.6"/><rect x="16.4" y="13.8" width="1.6" height="1.6"/></g></svg>
<div class="r" style="left:1567.70px;top:517.30px;width:1298.60px;height:1.40px;background:#dcdce2;"></div>
<svg class="r" style="left:1574.80px;top:523.65px;" width="18.2" height="18.2" viewBox="0 0 18.2 18.2"><g transform="scale(1.000)"><circle cx="9.1" cy="9.1" r="8.7" fill="#8fb2dc"/><circle cx="9.1" cy="9.1" r="7.2" fill="#7ba5d6"/><path d="M6.6 4.4L12.6 9.1L6.6 13.8Z" fill="#f4f9ff"/></g></svg>
<div class="t m" style="left:1598.40px;top:523.42px;color:#1c1c1c;">Gesundheitsreport</div>
<div class="t m" style="left:1929.60px;top:523.42px;color:#1c1c1c;">1029 obs. of 71 variables</div>
<svg class="r" style="left:2818.40px;top:523.35px;" width="22.6" height="19.6" viewBox="0 0 22.6 19.6"><rect x="0.7" y="0.7" width="21.2" height="18.2" rx="2" fill="#ffffff" stroke="#d3d9e1" stroke-width="1.2"/><path d="M2.6 0.4H20L22 2.4V4.8H0.6V2.4Z" fill="#c9d8e2"/><g fill="#d9dee5"><rect x="4.4" y="9" width="1.6" height="1.6"/><rect x="10.4" y="9" width="1.6" height="1.6"/><rect x="16.4" y="9" width="1.6" height="1.6"/><rect x="4.4" y="13.8" width="1.6" height="1.6"/><rect x="10.4" y="13.8" width="1.6" height="1.6"/><rect x="16.4" y="13.8" width="1.6" height="1.6"/></g></svg>
<div class="r" style="left:1567.70px;top:548.80px;width:1298.60px;height:1.40px;background:#dcdce2;"></div>
<svg class="r" style="left:1574.80px;top:555.15px;" width="18.2" height="18.2" viewBox="0 0 18.2 18.2"><g transform="scale(1.000)"><circle cx="9.1" cy="9.1" r="8.7" fill="#8fb2dc"/><circle cx="9.1" cy="9.1" r="7.2" fill="#7ba5d6"/><path d="M6.6 4.4L12.6 9.1L6.6 13.8Z" fill="#f4f9ff"/></g></svg>
<div class="t m" style="left:1598.40px;top:554.92px;color:#1c1c1c;">plot2</div>
<div class="t m" style="left:1929.60px;top:554.92px;color:#1c1c1c;">List of 9</div>
<svg class="r" style="left:2818.40px;top:556.15px;" width="19.6" height="19.6" viewBox="0 0 19.6 19.6"><g transform="scale(1.005)"><path d="M11.4 11.4L18 18" stroke="#9c9ca0" stroke-width="3.6" stroke-linecap="round"/><circle cx="7.4" cy="7.4" r="5.6" fill="#ffffff" stroke="#a2a2a6" stroke-width="2.4"/></g></svg>
<div class="r" style="left:1567.70px;top:580.30px;width:1298.60px;height:1.40px;background:#dcdce2;"></div>
<svg class="r" style="left:1574.80px;top:586.65px;" width="18.2" height="18.2" viewBox="0 0 18.2 18.2"><g transform="scale(1.000)"><circle cx="9.1" cy="9.1" r="8.7" fill="#8fb2dc"/><circle cx="9.1" cy="9.1" r="7.2" fill="#7ba5d6"/><path d="M6.6 4.4L12.6 9.1L6.6 13.8Z" fill="#f4f9ff"/></g></svg>
<div class="t m" style="left:1598.40px;top:586.42px;color:#1c1c1c;">plot1</div>
<div class="t m" style="left:1929.60px;top:586.42px;color:#1c1c1c;">List of 9</div>
<svg class="r" style="left:2818.40px;top:587.65px;" width="19.6" height="19.6" viewBox="0 0 19.6 19.6"><g transform="scale(1.005)"><path d="M11.4 11.4L18 18" stroke="#9c9ca0" stroke-width="3.6" stroke-linecap="round"/><circle cx="7.4" cy="7.4" r="5.6" fill="#ffffff" stroke="#a2a2a6" stroke-width="2.4"/></g></svg>
<div class="r" style="left:1567.70px;top:611.80px;width:1298.60px;height:1.40px;background:#dcdce2;"></div>
<svg class="r" style="left:1574.80px;top:618.15px;" width="18.2" height="18.2" viewBox="0 0 18.2 18.2"><g transform="scale(1.000)"><circle cx="9.1" cy="9.1" r="8.7" fill="#8fb2dc"/><circle cx="9.1" cy="9.1" r="7.2" fill="#7ba5d6"/><path d="M6.6 4.4L12.6 9.1L6.6 13.8Z" fill="#f4f9ff"/></g></svg>
<div class="t m" style="left:1598.40px;top:617.92px;color:#1c1c1c;">tips</div>
<div class="t m" style="left:1929.60px;top:617.92px;color:#1c1c1c;">244 obs. of 7 variables</div>
<svg class="r" style="left:2818.40px;top:617.85px;" width="22.6" height="19.6" viewBox="0 0 22.6 19.6"><rect x="0.7" y="0.7" width="21.2" height="18.2" rx="2" fill="#ffffff" stroke="#d3d9e1" stroke-width="1.2"/><path d="M2.6 0.4H20L22 2.4V4.8H0.6V2.4Z" fill="#c9d8e2"/><g fill="#d9dee5"><rect x="4.4" y="9" width="1.6" height="1.6"/><rect x="10.4" y="9" width="1.6" height="1.6"/><rect x="16.4" y="9" width="1.6" height="1.6"/><rect x="4.4" y="13.8" width="1.6" height="1.6"/><rect x="10.4" y="13.8" width="1.6" height="1.6"/><rect x="16.4" y="13.8" width="1.6" height="1.6"/></g></svg>
<div class="r" style="left:1567.70px;top:643.30px;width:1298.60px;height:1.40px;background:#dcdce2;"></div>
<div class="r" style="left:1921.40px;top:392.70px;width:1.40px;height:251.30px;background:#e2e2e7;"></div>
<div class="r" style="left:1567.70px;top:644.70px;width:1298.60px;height:29.40px;background:#f5f6fa;"></div>
<div class="t m" style="left:1574.60px;top:649.77px;color:#1c1c1c;">Values</div>
<div class="r" style="left:1567.70px;top:673.30px;width:1298.60px;height:1.40px;background:#dcdce2;"></div>
<div class="t m" style="left:1598.40px;top:677.72px;color:#1c1c1c;">a</div>
<div class="t m" style="left:1929.60px;top:677.72px;color:#1c1c1c;">10</div>
<div class="r" style="left:1567.70px;top:700.40px;width:1298.60px;height:1.40px;background:#dcdce2;"></div>
<div class="t m" style="left:1598.40px;top:704.82px;color:#1c1c1c;">b</div>
<div class="t m" style="left:1929.60px;top:704.82px;color:#1c1c1c;">15</div>
<div class="r" style="left:1567.70px;top:727.50px;width:1298.60px;height:1.40px;background:#dcdce2;"></div>
<div class="t m" style="left:1598.40px;top:731.92px;color:#1c1c1c;">header</div>
<div class="t m" style="left:1929.60px;top:731.92px;color:#1c1c1c;">TRUE</div>
<div class="r" style="left:1567.70px;top:754.60px;width:1298.60px;height:1.40px;background:#dcdce2;"></div>
<div class="r" style="left:1921.40px;top:674.00px;width:1.40px;height:81.30px;background:#e2e2e7;"></div>
<div class="r" style="left:1566.40px;top:780.40px;width:1301.20px;height:880.60px;background:#e7e6ea;border:1.3px solid #dcdce1;border-radius:4px 4px 0 0;"></div>
<div class="r" style="left:1567.70px;top:815.20px;width:1298.60px;height:844.50px;background:#fefeff;"></div>
<div class="r" style="left:1566.40px;top:814.60px;width:1301.20px;height:1.40px;background:#dcdce1;"></div>
<div class="r" style="left:1566.80px;top:780.40px;width:63.20px;height:34.20px;background:#efeef2;border:1.3px solid #dcdce1;border-bottom:none;border-radius:5px 3px 0 0;"></div>
<div class="t" style="left:1580.70px;top:791.33px;font-size:16.5px;color:#202024;font-weight:700;transform:scaleX(0.9388);">Files</div>
<div class="r" style="left:1630.00px;top:780.40px;width:66.60px;height:36.00px;background:#f5f6fa;border:1.3px solid #dcdce1;border-bottom:none;border-radius:3px 3px 0 0;"></div>
<div class="t" style="left:1643.50px;top:791.33px;font-size:16.5px;color:#202024;font-weight:700;transform:scaleX(0.9990);">Plots</div>
<div class="r" style="left:1696.60px;top:780.40px;width:166.80px;height:34.20px;background:#efeef2;border:1.3px solid #dcdce1;border-bottom:none;border-radius:3px 3px 0 0;"></div>
<div class="t" style="left:1710.60px;top:791.33px;font-size:16.5px;color:#202024;font-weight:700;transform:scaleX(0.9508);">Packages</div>
<div class="t" style="left:1812.20px;top:791.33px;font-size:16.5px;color:#202024;font-weight:700;transform:scaleX(1.0124);">Help</div>
<div class="r" style="left:1863.40px;top:780.40px;width:82.60px;height:34.20px;background:#efeef2;border:1.3px solid #dcdce1;border-bottom:none;border-radius:3px 3px 0 0;"></div>
<div class="t" style="left:1877.20px;top:791.33px;font-size:16.5px;color:#202024;font-weight:700;transform:scaleX(1.0189);">Viewer</div>
<svg class="r" style="left:2805.00px;top:801.40px;" width="20.6" height="9" viewBox="0 0 20.6 9"><rect x="0.7" y="0.7" width="19.2" height="7.6" rx="1" fill="#f0f4f9" stroke="#898990" stroke-width="1.3"/><path d="M1 0.6H19.6V4.2H1Z" fill="#87878e"/><path d="M1.6 0.1H19L19.8 0.8H0.8Z" fill="#87878e"/></svg>
<svg class="r" style="left:2832.00px;top:792.40px;" width="20.6" height="18" viewBox="0 0 20.6 18"><rect x="0.7" y="0.7" width="19.2" height="16.6" rx="1" fill="#ebeaee" stroke="#898990" stroke-width="1.3"/><path d="M1 0.6H19.6V4.2H1Z" fill="#87878e"/><path d="M1.6 0.1H19L19.8 0.8H0.8Z" fill="#87878e"/></svg>
<div class="r" style="left:1567.70px;top:815.60px;width:1298.60px;height:32.40px;background:#f5f6fa;"></div>
<div class="r" style="left:1566.40px;top:847.60px;width:1301.20px;height:1.40px;background:#dcdce1;"></div>
<svg class="r" style="left:1579.20px;top:825.00px;" width="22" height="16" viewBox="0 0 22 16"><path  d="M0.7 8L9 0.8V4.6H21.3V11.4H9V15.2Z" fill="#d8e7f4" stroke="#cbdff0" stroke-width="1" stroke-linejoin="round"/></svg>
<svg class="r" style="left:1617.00px;top:825.00px;" width="22" height="16" viewBox="0 0 22 16"><path transform="translate(22 0) scale(-1 1)" d="M0.7 8L9 0.8V4.6H21.3V11.4H9V15.2Z" fill="#d8e7f4" stroke="#cbdff0" stroke-width="1" stroke-linejoin="round"/></svg>
<div class="r" style="left:1648.70px;top:822.00px;width:1.30px;height:19.00px;background:#d6d6dc;"></div>
<div class="r" style="left:1750.40px;top:822.00px;width:1.30px;height:19.00px;background:#d6d6dc;"></div>
<div class="r" style="left:1869.20px;top:822.00px;width:1.30px;height:19.00px;background:#d6d6dc;"></div>
<div class="r" style="left:1915.40px;top:822.00px;width:1.30px;height:19.00px;background:#d6d6dc;"></div>
<svg class="r" style="left:1661.80px;top:820.60px;" width="22" height="21" viewBox="0 0 22 21"><path d="M9.4 11.6L1.8 19.4" stroke="#c9c9cd" stroke-width="3" stroke-linecap="round"/><circle cx="14" cy="7.4" r="6.4" fill="#eef5fb" stroke="#c9d5e3" stroke-width="1.6"/><path d="M14 3.8V11M10.4 7.4H17.6" stroke="#a5dcc0" stroke-width="2.2"/></svg>
<div class="t" style="left:1692.80px;top:825.73px;font-size:16.5px;color:#c2c2c7;transform:scaleX(0.9721);">Zoom</div>
<svg class="r" style="left:1761.40px;top:823.60px;" width="25" height="19" viewBox="0 0 25 19"><rect x="5.4" y="0.7" width="19" height="17.4" fill="#fdf7e4" stroke="#c9c9d0" stroke-width="1.1"/><path d="M6 14Q11 6.6 15.4 11.4Q19 6 23.8 12V17.5H6Z" fill="#f2b84c"/><path d="M6 4.2Q12 1.2 23.8 5V1.3H6Z" fill="#7db4e4"/><path d="M0.2 8.6H8V5.4L13.4 10L8 14.4V11.4H0.2Z" fill="#4a5e82" stroke="#e8edf5" stroke-width="0.6"/></svg>
<div class="t" style="left:1792.20px;top:825.73px;font-size:16.5px;color:#303034;transform:scaleX(0.9604);">Export</div>
<svg class="r" style="left:1849.45px;top:831.90px;" width="7.5" height="4.2" viewBox="0 0 7.5 4.2"><path d="M0 0H7.5L3.75 4.2Z" fill="#222"/></svg>
<svg class="r" style="left:1879.40px;top:821.80px;" width="15.4" height="15.4" viewBox="0 0 15.4 15.4"><g opacity="0.36"><circle cx="7.7" cy="7.7" r="7.3" fill="#e46a62"/><path d="M4.7 4.7L10.7 10.7M10.7 4.7L4.7 10.7" stroke="#fff" stroke-width="2"/></g></svg>
<svg class="r" style="left:1929.00px;top:819.40px;" width="24" height="24" viewBox="0 0 24 24"><g opacity="0.2"><ellipse cx="13" cy="22.6" rx="8" ry="1.3" fill="#d9d9de"/><path d="M21.8 1.6L14.2 10.2" stroke="#d98a72" stroke-width="3.6" stroke-linecap="round"/><path d="M11.2 8.4L17.4 13.4Q20.4 17.6 19.6 21.2Q12 24.6 0.6 20Q8.6 15.6 11.2 8.4Z" fill="#e3bd5c" stroke="#caa244" stroke-width="0.8" stroke-linejoin="round"/><path d="M11 9.4L17.2 14.2" stroke="#b98d3a" stroke-width="2.4" stroke-linecap="round"/><path d="M5.4 20.6Q9.8 17.6 11.6 13.4M10 22Q13 18.8 14 15M14.6 22Q16 19 16.2 16.2" stroke="#c9a043" stroke-width="0.8" fill="none"/></g></svg>
<svg class="r" style="left:2837.00px;top:819.80px;" width="23" height="24" viewBox="0 0 23 24"><path d="M17.2 6.4A8 8 0 1 0 19 15.4" fill="none" stroke="#e6e9ef" stroke-width="5.6"/><path d="M12.6 1.6L21.6 2.4L20.4 11.2Z" fill="#e6e9ef" stroke="#e6e9ef" stroke-width="1.6" stroke-linejoin="round"/><path d="M17.2 6.4A8 8 0 1 0 19 15.4" fill="none" stroke="#f4f6fa" stroke-width="3.2"/><path d="M14.4 2.8L20.4 3.4L19.6 9.2Z" fill="#f4f6fa"/></svg>
</body></html>
